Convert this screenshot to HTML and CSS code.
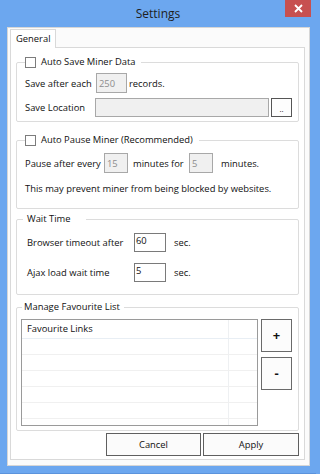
FILE: index.html
```html
<!DOCTYPE html>
<html>
<head>
<meta charset="utf-8">
<title>Settings</title>
<link rel="stylesheet" href="styles.css">
</head>
<body>
<div class="window">
  <div class="titlebar">
    <span></span>
    <span class="title">Settings</span>
    <span class="close">
      <svg width="9" height="9" viewBox="0 0 9 9"><path d="M1 1L8 8M8 1L1 8" stroke="#fff" stroke-width="1.8" fill="none"/></svg>
    </span>
  </div>
  <div class="client">
    <div class="tabs"><div class="tab">General</div></div>
    <div class="panel">
      <fieldset class="group g-save">
        <legend class="legend"><span class="legend-in"><span class="check"></span>Auto Save Miner Data</span></legend>
        <div class="row h20">
          <span class="lbl w-save">Save after each</span>
          <span class="field disabled w-250">250</span>
          <span class="after a2">records.</span>
        </div>
        <div class="row h19 gap5">
          <span class="lbl w-loc">Save Location</span>
          <span class="field disabled w-path"></span>
          <span class="browse">..</span>
        </div>
      </fieldset>

      <fieldset class="group g-pause">
        <legend class="legend"><span class="legend-in"><span class="check"></span>Auto Pause Miner (Recommended)</span></legend>
        <div class="row h20">
          <span class="lbl w-pause">Pause after every</span>
          <span class="field disabled w-min">15</span>
          <span class="after a5 w-for">minutes for</span>
          <span class="field disabled w-min">5</span>
          <span class="after a8">minutes.</span>
        </div>
        <div class="row note">This may prevent miner from being blocked by websites.</div>
      </fieldset>

      <fieldset class="group g-wait">
        <legend class="legend plain-wait">Wait Time</legend>
        <div class="row h19">
          <span class="lbl w-wait">Browser timeout after</span>
          <span class="field top w-sec">60</span>
          <span class="after a7">sec.</span>
        </div>
        <div class="row h19 gap11">
          <span class="lbl w-wait">Ajax load wait time</span>
          <span class="field top w-sec">5</span>
          <span class="after a7">sec.</span>
        </div>
      </fieldset>

      <fieldset class="group g-fav">
        <legend class="legend plain-fav">Manage Favourite List</legend>
        <div class="fav-body">
          <div class="listview">
            <div class="lv-row lv-head"><span class="lv-c1">Favourite Links</span><span class="lv-c2"></span></div>
            <div class="lv-row"><span class="lv-c1"></span><span class="lv-c2"></span></div>
            <div class="lv-row"><span class="lv-c1"></span><span class="lv-c2"></span></div>
            <div class="lv-row"><span class="lv-c1"></span><span class="lv-c2"></span></div>
            <div class="lv-row"><span class="lv-c1"></span><span class="lv-c2"></span></div>
            <div class="lv-row"><span class="lv-c1"></span><span class="lv-c2"></span></div>
            <div class="lv-row lv-last"><span class="lv-c1"></span><span class="lv-c2"></span></div>
          </div>
          <div class="side">
            <button class="sq">+</button>
            <button class="sq">-</button>
          </div>
        </div>
      </fieldset>

      <div class="actions">
        <button class="btn w-cancel">Cancel</button>
        <button class="btn w-apply">Apply</button>
      </div>
    </div>
  </div>
</div>
</body>
</html>
```
FILE: styles.css
```css
html, body {
  margin: 0;
  padding: 0;
}
body {
  background: #6ca7ef;
  font-family: "Open Sans", "Noto Sans", sans-serif;
  font-size: 9.4px;
  color: #111;
}
.window {
  width: 316px;
  height: 474px;
  box-sizing: border-box;
  display: flex;
  flex-direction: column;
  background: #6ca7ef;
  border-bottom: 1px solid #5b93dc;
}
.titlebar {
  height: 27px;
  flex: none;
  display: grid;
  grid-template-columns: 1fr auto 1fr;
  align-items: start;
}
.title {
  font-size: 12px;
  line-height: 28px;
  color: #1e1e1e;
}
.close {
  justify-self: end;
  margin-right: 5px;
  width: 26px;
  height: 17px;
  background: #c75050;
  display: flex;
  align-items: center;
  justify-content: center;
}
.client {
  flex: 1;
  min-height: 0;
  margin: 0 6px 7px 7px;
  background: #fbfbfb;
  border: 1px solid #d6d6d6;
  padding: 1px 4px 5px 2px;
  display: flex;
  flex-direction: column;
}
.tabs {
  display: flex;
  flex: none;
}
.tab {
  position: relative;
  z-index: 1;
  width: 46px;
  height: 19px;
  box-sizing: border-box;
  padding: 0 0 0 5px;
  border: 1px solid #d9d9d9;
  border-bottom: none;
  background: #fff;
  margin-bottom: -1px;
  line-height: 17px;
}
.panel {
  flex: 1;
  min-height: 0;
  background: #fff;
  border: 1px solid #d9d9d9;
  padding: 7px 5px 0 5px;
  display: flex;
  flex-direction: column;
}
.group {
  margin: 0;
  min-width: 0;
  border: 1px solid #dcdcdc;
  border-radius: 2px;
}
.legend {
  height: 14px;
  line-height: 14px;
  padding: 0 6px 0 0;
}
.legend-in {
  display: flex;
  align-items: center;
  height: 14px;
}
.check {
  width: 11px;
  height: 11px;
  box-sizing: border-box;
  border: 1px solid #7c7c7c;
  background: #fff;
  margin-right: 5px;
}
.plain-wait {
  margin-left: -4px;
  padding: 0 16px 0 4px;
}
.plain-fav {
  margin-left: 1px;
  padding: 0 4px 0 2px;
}
.g-save {
  padding: 4px 0 4px 8px;
}
.g-pause {
  margin-top: 11px;
  padding: 6px 0 12px 8px;
}
.g-wait {
  margin-top: 3px;
  padding: 7px 0 12px 10px;
}
.g-fav {
  margin-top: 5px;
  padding: 5px 0 4px 4px;
}
.row {
  display: flex;
  align-items: center;
}
.h20 { height: 20px; }
.h19 { height: 19px; }
.gap5 { margin-top: 5px; }
.gap11 { margin-top: 11px; }
.note {
  height: 16px;
  margin-top: 7px;
}
.lbl { flex: none; }
.w-save { width: 71px; }
.w-loc { width: 70px; }
.w-pause { width: 79px; }
.w-wait { width: 107px; }
.w-for { width: 56px; }
.a2 { margin-left: 2px; }
.a5 { margin-left: 5px; }
.a7 { margin-left: 8px; }
.a8 { margin-left: 8px; }
.field {
  flex: none;
  box-sizing: border-box;
  height: 100%;
  border: 1px solid #7a7a7a;
  background: #fff;
  display: flex;
  align-items: center;
  padding-left: 2px;
}
.field.disabled {
  background: #f0f0f0;
  color: #8d8d8d;
  border-color: #a8a8a8;
}
.field.top {
  align-items: flex-start;
  padding-left: 1px;
  line-height: 13px;
}
.w-250 { width: 31px; }
.w-path { width: 174px; }
.w-min { width: 24px; }
.w-sec { width: 32px; }
.browse {
  flex: none;
  box-sizing: border-box;
  width: 21px;
  height: 19px;
  margin-left: 2px;
  border: 1px solid #555;
  background: #fdfdfd;
  display: flex;
  align-items: flex-end;
  justify-content: center;
  line-height: 14px;
  font-size: 8px;
}
.fav-body {
  display: flex;
  align-items: flex-start;
}
.listview {
  width: 237px;
  height: 107px;
  box-sizing: border-box;
  border: 1px solid #9a9a9a;
  overflow: hidden;
  background: #fff;
}
.lv-row {
  display: flex;
  height: 16px;
  box-sizing: border-box;
  border-bottom: 1px solid #f0f0f0;
}
.lv-head {
  height: 19px;
  line-height: 18px;
  border-bottom-color: #e8eef4;
}
.lv-c1 {
  width: 207px;
  box-sizing: border-box;
  padding-left: 5px;
  border-right: 1px solid #eef0f2;
}
.lv-c2 {
  flex: 1;
}
.side {
  display: flex;
  flex-direction: column;
  gap: 5px;
  margin-left: 3px;
}
button {
  font-family: inherit;
  color: #111;
  margin: 0;
  padding: 0;
}
.sq {
  width: 31px;
  height: 33px;
  box-sizing: border-box;
  border: 1px solid #6a6a6a;
  background: #fcfcfc;
  font-size: 13px;
  font-weight: bold;
  line-height: 1;
}
.actions {
  display: flex;
  justify-content: flex-end;
  gap: 2px;
  margin-top: 2px;
}
.btn {
  height: 23px;
  box-sizing: border-box;
  border: 1px solid #5f5f5f;
  background: #fbfbfb;
  font-size: 9.4px;
}
.w-cancel { width: 95px; }
.w-apply { width: 96px; }
```
